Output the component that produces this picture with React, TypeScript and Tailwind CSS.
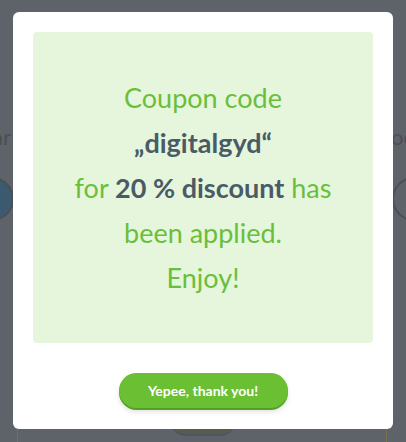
export default function App() {
  return (
    <div className="relative h-[442px] w-[406px] overflow-hidden bg-[#5e6269] font-['Lato',sans-serif]">
      {/* page behind the overlay */}
      <span className="absolute left-[-8px] top-[120px] text-[22px] text-[#4b4f55]">ar</span>
      <span className="absolute right-[-10px] top-[120px] text-[22px] text-[#4b4f55]">oo</span>
      <div className="absolute left-[-30px] top-[177px] h-[44px] w-[44px] rounded-full border-2 border-[#4b4f55] bg-[#3b5a70]" />
      <div className="absolute right-[-30px] top-[177px] h-[44px] w-[44px] rounded-full border-2 border-[#4b4f55]" />
      <div className="absolute left-[17px] top-[429px] h-[20px] w-px bg-[#7a7050]" />
      <div className="absolute right-[19px] top-[429px] h-[20px] w-px bg-[#7a7050]" />
      <div className="absolute left-[170px] top-[420px] h-[16px] w-[66px] rounded-b-full border-b-2 border-[#4a5566] bg-[#5c5a4c]" />

      <div className="relative ml-[13px] mt-[12px] flex h-[417px] w-[380px] flex-col items-center rounded-[6px] bg-white p-5">
        <div className="flex h-[311px] w-[340px] flex-col items-center justify-center rounded-[4px] bg-[#e5f6dd] text-center text-[27px] leading-[45px] text-[#6abf3a]">
          <div>Coupon code</div>
          <div className="font-bold text-[#4a5b66]">„digitalgyd“</div>
          <div>
            for <span className="font-bold text-[#4a5b66]">20 % discount</span> has
          </div>
          <div>been applied.</div>
          <div>Enjoy!</div>
        </div>
        <button className="mt-[30px] flex h-[35px] w-[169px] items-center justify-center rounded-full bg-[#6abf32] text-[14px] font-bold text-white shadow-[0_2px_0_#55a024,0_4px_5px_rgba(0,0,0,0.12)]">
          Yepee, thank you!
        </button>
      </div>
    </div>
  )
}
